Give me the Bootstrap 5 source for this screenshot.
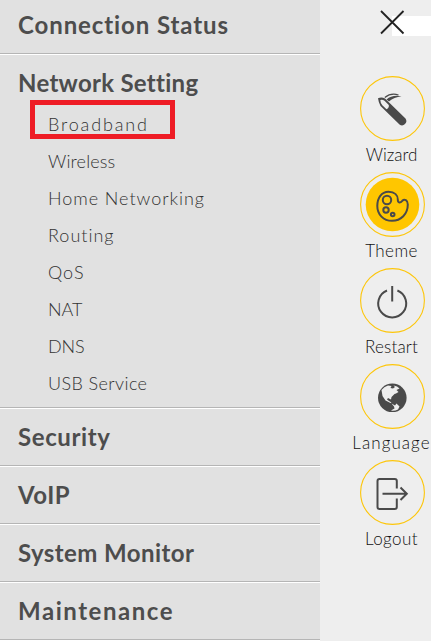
<!DOCTYPE html>
<html lang="en">
<head>
<meta charset="utf-8">
<meta name="viewport" content="width=device-width, initial-scale=1">
<title>Router Menu</title>
<link href="https://cdn.jsdelivr.net/npm/bootstrap@5.3.0/dist/css/bootstrap.min.css" rel="stylesheet">
<style>
body{font-family:Lato,"Open Sans",sans-serif;background:#fff;width:432px;height:642px}
.shell{width:431px;height:641px;background:#eee}
.side-menu{width:320px;background:#e1e1e1;color:#4d4d4d}
.menu-row{border-bottom:1px solid #b5b5b5;box-shadow:0 1px #fff;margin-bottom:1px;padding-left:18px}
.menu-title{font-weight:700;font-size:24px;line-height:56px;height:56px;margin:0;white-space:nowrap}
.menu-first .menu-title{height:53px;line-height:50px}
.sub-links{padding:0 0 5px 30px;margin:-5px 0 0}
.sub-links li{height:37px;line-height:37px;font-weight:300;font-size:18px;white-space:nowrap}
.sub-links a{color:#333}
.highlight{left:30px;top:100px;width:145px;height:39px;border:5px solid #ee1c25}
.tools{width:111px;padding-left:32px}
.close-strip{height:20px;margin:16px 0 40px 40px;background:#fff;position:relative}
.close-btn{left:-13px;top:-7px}
.tool{height:96px;width:79px;color:#111}
.tool svg{margin-left:2px}
.tool span{font-weight:300;font-size:17px;line-height:28px;white-space:nowrap}
.ink{fill:none;stroke:#4a4a4a;stroke-width:2}
.ring{fill:none;stroke:#fdc60a;stroke-width:1.1}
.s-a{letter-spacing:.9px}.s-b{letter-spacing:.28px}.s-c{letter-spacing:.6px}.s-d{letter-spacing:.5px}
.s-e{letter-spacing:.42px}.s-f{letter-spacing:1.55px}.s-g{letter-spacing:1.85px}.s-h{letter-spacing:.15px}
.s-i{letter-spacing:1px}.s-j{letter-spacing:-.1px}.s-k{letter-spacing:.4px}.s-l{letter-spacing:.95px}
.s-m{letter-spacing:1.05px}
</style>
</head>
<body class="overflow-hidden">
<div class="shell d-flex overflow-hidden position-relative">
<nav class="side-menu flex-shrink-0">
  <div class="menu-row menu-first"><h2 class="menu-title s-a">Connection Status</h2></div>
  <div class="menu-row">
    <h2 class="menu-title s-b">Network Setting</h2>
    <ul class="sub-links list-unstyled">
      <li><a class="text-decoration-none s-g" href="#">Broadband</a></li>
      <li><a class="text-decoration-none s-h" href="#">Wireless</a></li>
      <li><a class="text-decoration-none s-l" href="#">Home Networking</a></li>
      <li><a class="text-decoration-none s-i" href="#">Routing</a></li>
      <li><a class="text-decoration-none s-i" href="#">QoS</a></li>
      <li><a class="text-decoration-none s-j" href="#">NAT</a></li>
      <li><a class="text-decoration-none s-j" href="#">DNS</a></li>
      <li><a class="text-decoration-none s-k" href="#">USB Service</a></li>
    </ul>
  </div>
  <div class="menu-row"><h2 class="menu-title s-c">Security</h2></div>
  <div class="menu-row"><h2 class="menu-title s-d">VoIP</h2></div>
  <div class="menu-row"><h2 class="menu-title s-e">System Monitor</h2></div>
  <div class="menu-row"><h2 class="menu-title s-f">Maintenance</h2></div>
</nav>
<div class="highlight position-absolute"></div>
<aside class="tools flex-shrink-0">
  <div class="close-strip"><svg class="close-btn position-absolute" width="26" height="26" viewBox="0 0 26 26"><path d="M2 2 24.500 24.500M24.500 2 2 24.500" fill="none" stroke="#222" stroke-width="1.8"/></svg></div>
  <div class="tool d-flex flex-column align-items-center">
    <svg width="65" height="65" viewBox="0 0 65 65"><circle class="ring" cx="32.500" cy="32.500" r="31.900"/>
      <path fill="#4a4a4a" fill-rule="evenodd" d="M18 22.300Q21.500 20.500 25 22.500L45.500 42.500Q47.500 45.500 45 48Q42.500 50.500 39.500 48.500L20.500 30Q18.500 26.500 18 22.300ZM20.300 24Q20.500 27.500 22.300 29.300L26.500 33.300Q29.300 32 28.800 29L24.500 24.800Q22.500 23.300 20.300 24Z"/>
      <path fill="none" stroke="#4a4a4a" stroke-width="1.300" d="M24.800 21.500Q31 16.500 38.500 19"/>
      <path fill="#4a4a4a" d="M26.500 23.500Q32 18.500 41.500 20.200Q34 21 29 25.500Z"/></svg>
    <span>Wizard</span>
  </div>
  <div class="tool d-flex flex-column align-items-center">
    <svg width="65" height="65" viewBox="0 0 65 65"><circle class="ring" cx="32.500" cy="32.500" r="31.900"/><circle cx="32.500" cy="32.500" r="26.800" fill="#ffc600"/>
      <path class="ink" d="M28.500 19.800C35 19.800 37.800 23.500 37.800 27.500C37.800 31.500 40.500 31 42.300 28.800C44.500 26.500 47.800 28 47.800 32.500C47.800 42 41 48.800 32 48.800C23.500 48.800 17.300 42.500 17.300 34C17.300 26 21.500 19.800 28.500 19.800Z"/>
      <circle class="ink" cx="27" cy="28" r="4.200"/><circle class="ink" cx="26" cy="38" r="2.700"/><circle class="ink" cx="32.700" cy="42.500" r="1.800"/></svg>
    <span class="s-k">Theme</span>
  </div>
  <div class="tool d-flex flex-column align-items-center">
    <svg width="65" height="65" viewBox="0 0 65 65"><circle class="ring" cx="32.500" cy="32.500" r="31.900"/><path class="ink" d="M32.200 18V33.500M27 22.500A14 14 0 1 0 37.400 22.500"/></svg>
    <span class="s-h">Restart</span>
  </div>
  <div class="tool d-flex flex-column align-items-center">
    <svg width="65" height="65" viewBox="0 0 65 65"><circle class="ring" cx="32.500" cy="32.500" r="31.900"/><circle cx="32.300" cy="33.800" r="14.300" fill="#4a4a4a"/>
      <path fill="#eee" d="M21.500 26Q24 22.500 28 21.500L31.500 22 30.500 24 33 24.500 35 23 33.500 21.500Q37.500 22 39.500 24.500L36.500 26 38.500 28 36 29.500 34.500 30 31.500 33 31 35.500 28 34 27 35.500 29 37 31.500 38.500 30.500 39 25.500 36.500 22.500 32ZM31.500 39.500 35 41.500 36.500 39.500 39.500 42.500 38 45.500Q34.500 47.200 31 46.500L34.500 44.500 34 42.500Z"/></svg>
    <span class="s-m">Language</span>
  </div>
  <div class="tool d-flex flex-column align-items-center">
    <svg width="65" height="65" viewBox="0 0 65 65"><circle class="ring" cx="32.500" cy="32.500" r="31.900"/><path class="ink" d="M36.800 28.500V21Q36.800 19 34.800 19H19.500Q17.500 19 17.500 21V47Q17.500 49 19.500 49H34.800Q36.800 49 36.800 47V38.500M22.500 33.800H46.500M40.500 27.500 46.800 33.800 40.500 40"/></svg>
    <span class="s-k">Logout</span>
  </div>
</aside>
</div>
<script src="https://cdn.jsdelivr.net/npm/bootstrap@5.3.0/dist/js/bootstrap.bundle.min.js"></script>
</body>
</html>
